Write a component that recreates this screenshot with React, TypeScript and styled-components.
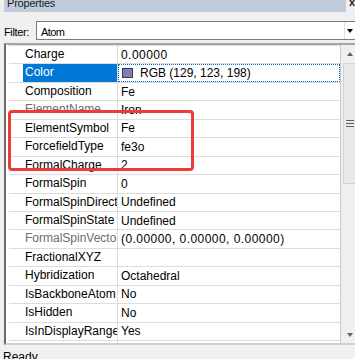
import React from "react";
import styled, { createGlobalStyle } from "styled-components";

interface Property {
    name: string;
    value: string;
    muted?: boolean;
    numeric?: boolean;
    swatch?: string;
    selected?: boolean;
}

const properties: Property[] = [
    { name: "Charge", value: "0.00000", numeric: true },
    { name: "Color", value: "RGB (129, 123, 198)", swatch: "rgb(129, 123, 198)", selected: true },
    { name: "Composition", value: "Fe" },
    { name: "ElementName", value: "Iron", muted: true },
    { name: "ElementSymbol", value: "Fe" },
    { name: "ForcefieldType", value: "fe3o" },
    { name: "FormalCharge", value: "2" },
    { name: "FormalSpin", value: "0" },
    { name: "FormalSpinDirect", value: "Undefined" },
    { name: "FormalSpinState", value: "Undefined" },
    { name: "FormalSpinVecto", value: "(0.00000, 0.00000, 0.00000)", muted: true, numeric: true },
    { name: "FractionalXYZ", value: "" },
    { name: "Hybridization", value: "Octahedral" },
    { name: "IsBackboneAtom", value: "No" },
    { name: "IsHidden", value: "No" },
    { name: "IsInDisplayRange", value: "Yes" },
    { name: "", value: "" }
];

const App: React.FC = () => {
    return (
        <>
            <GlobalStyle />
            <Panel>
                <TitleBar>
                    <TitleCaption>Properties</TitleCaption>
                    <CloseGlyph>x</CloseGlyph>
                </TitleBar>
                <FilterRow>
                    <FilterLabel>Filter:</FilterLabel>
                    <Combo>
                        <ComboText>Atom</ComboText>
                        <DropButton>
                            <DownTriangle color="#000" />
                        </DropButton>
                    </Combo>
                </FilterRow>
                <GridFrame>
                    <Rows>
                        {properties.map((p, i) => (
                            <Row key={i}>
                                <Gutter />
                                <NameCell muted={p.muted} selected={p.selected}>
                                    {p.name}
                                </NameCell>
                                <ValueCell numeric={p.numeric} selected={p.selected}>
                                    {p.swatch && <Swatch style={{ background: p.swatch }} />}
                                    {p.value}
                                </ValueCell>
                            </Row>
                        ))}
                    </Rows>
                    <ScrollBar>
                        <ArrowButton>
                            <UpTriangle />
                        </ArrowButton>
                        <Thumb>
                            <Grip />
                            <Grip />
                            <Grip />
                        </Thumb>
                        <Track />
                        <ArrowButton>
                            <DownTriangle color="#606060" />
                        </ArrowButton>
                    </ScrollBar>
                </GridFrame>
                <StatusBar>Ready</StatusBar>
                <Highlight />
            </Panel>
        </>
    );
};

const GlobalStyle = createGlobalStyle`
    html, body {
        margin: 0;
        padding: 0;
        background: #f0f0f0;
    }
    body {
        font-family: "Liberation Sans", Arial, sans-serif;
        font-size: 12px;
        color: #000;
    }
`;

const Panel = styled.div`
    position: relative;
    display: flex;
    flex-direction: column;
    width: 355px;
    height: 359px;
    overflow: hidden;
    background: #f0f0f0;
`;

const TitleBar = styled.div`
    display: flex;
    height: 12px;
`;

const TitleCaption = styled.div`
    box-sizing: border-box;
    width: 345px;
    height: 12px;
    margin-left: 4px;
    padding-left: 3px;
    background: #bfcddb;
    font-size: 11px;
    line-height: 7px;
    letter-spacing: -0.2px;
    color: #1a1a1a;
    overflow: hidden;
`;

const CloseGlyph = styled.div`
    margin-left: 3px;
    font-size: 11px;
    font-weight: bold;
    line-height: 5px;
    color: #222;
`;

const FilterRow = styled.div`
    display: flex;
    align-items: center;
    height: 20px;
    margin-top: 8px;
    padding-left: 4px;
`;

const FilterLabel = styled.div`
    width: 32px;
    padding-top: 3px;
    font-size: 11px;
    letter-spacing: -0.35px;
`;

const Combo = styled.div`
    box-sizing: border-box;
    display: flex;
    align-items: center;
    flex: 1;
    height: 19px;
    margin-top: 1px;
    border: 1px solid #7a7a7a;
    border-right: none;
    background: #fff;
`;

const ComboText = styled.div`
    flex: 1;
    padding: 3px 0 0 4px;
    font-size: 11px;
    letter-spacing: -0.6px;
`;

const DropButton = styled.div`
    display: flex;
    align-items: center;
    justify-content: center;
    width: 10px;
    height: 100%;
    border-left: 1px solid #e3e3e3;
`;

const DownTriangle = styled.div<{ color: string }>`
    width: 0;
    height: 0;
    border-left: 3.5px solid transparent;
    border-right: 3.5px solid transparent;
    border-top: 4px solid ${(props) => props.color};
`;

const UpTriangle = styled.div`
    width: 0;
    height: 0;
    border-left: 3.5px solid transparent;
    border-right: 3.5px solid transparent;
    border-bottom: 4px solid #606060;
`;

const GridFrame = styled.div`
    box-sizing: border-box;
    display: flex;
    flex: none;
    width: 355px;
    height: 302px;
    margin: 3px 0 0 4px;
    border-top: 2px solid #a5a5a5;
    border-bottom: 2px solid #cfcfcf;
    border-left: 2px solid #6a6a6a;
`;

const Rows = styled.div`
    flex: none;
    width: 335px;
    padding-left: 3px;
    box-sizing: border-box;
    border-right: 1px solid #c8c8c8;
    background: #fff;
    overflow: hidden;
`;

const Row = styled.div`
    box-sizing: border-box;
    display: grid;
    grid-template-columns: 14px 95px 1fr;
    height: 18.45px;
    border-top: 1px solid #dcdcdc;
`;

const Gutter = styled.div`
    background: #fff;
`;

const NameCell = styled.div<{ muted?: boolean; selected?: boolean }>`
    padding-left: 2px;
    border-right: 1px solid #dcdcdc;
    line-height: 17px;
    white-space: nowrap;
    overflow: hidden;
    background: ${(props) => (props.selected ? "#0078d7" : "#fff")};
    color: ${(props) => (props.selected ? "#fff" : props.muted ? "#6d6d6d" : "#000")};
`;

const ValueCell = styled.div<{ numeric?: boolean; selected?: boolean }>`
    display: flex;
    align-items: center;
    padding-left: 3px;
    white-space: nowrap;
    overflow: hidden;
    letter-spacing: ${(props) => (props.numeric ? "0.45px" : "0")};
    outline: ${(props) => (props.selected ? "1px dotted #0a64c8" : "none")};
    outline-offset: -1px;
`;

const Swatch = styled.span`
    box-sizing: border-box;
    flex: none;
    width: 11px;
    height: 10px;
    margin: 0 7px 0 1px;
    border: 1px solid #3c3c3c;
`;

const ScrollBar = styled.div`
    display: flex;
    flex-direction: column;
    width: 17px;
    background: #f0f0f0;
`;

const ArrowButton = styled.div`
    display: flex;
    align-items: center;
    justify-content: center;
    height: 17px;
`;

const Thumb = styled.div`
    box-sizing: border-box;
    display: flex;
    flex-direction: column;
    align-items: center;
    justify-content: center;
    gap: 2px;
    height: 121px;
    margin: 1px 2px 0 2px;
    border: 1px solid #d2d2d2;
    background: #e8e8e8;
`;

const Grip = styled.div`
    width: 8px;
    height: 1px;
    background: #606060;
`;

const Track = styled.div`
    flex: 1;
`;

const StatusBar = styled.div`
    height: 14px;
    padding: 5px 0 0 3px;
    line-height: 14px;
`;

const Highlight = styled.div`
    position: absolute;
    left: 8px;
    top: 110px;
    width: 186px;
    height: 61px;
    box-sizing: border-box;
    border: 3.5px solid #ef3a3a;
    border-radius: 4px;
    pointer-events: none;
`;

export default App;
